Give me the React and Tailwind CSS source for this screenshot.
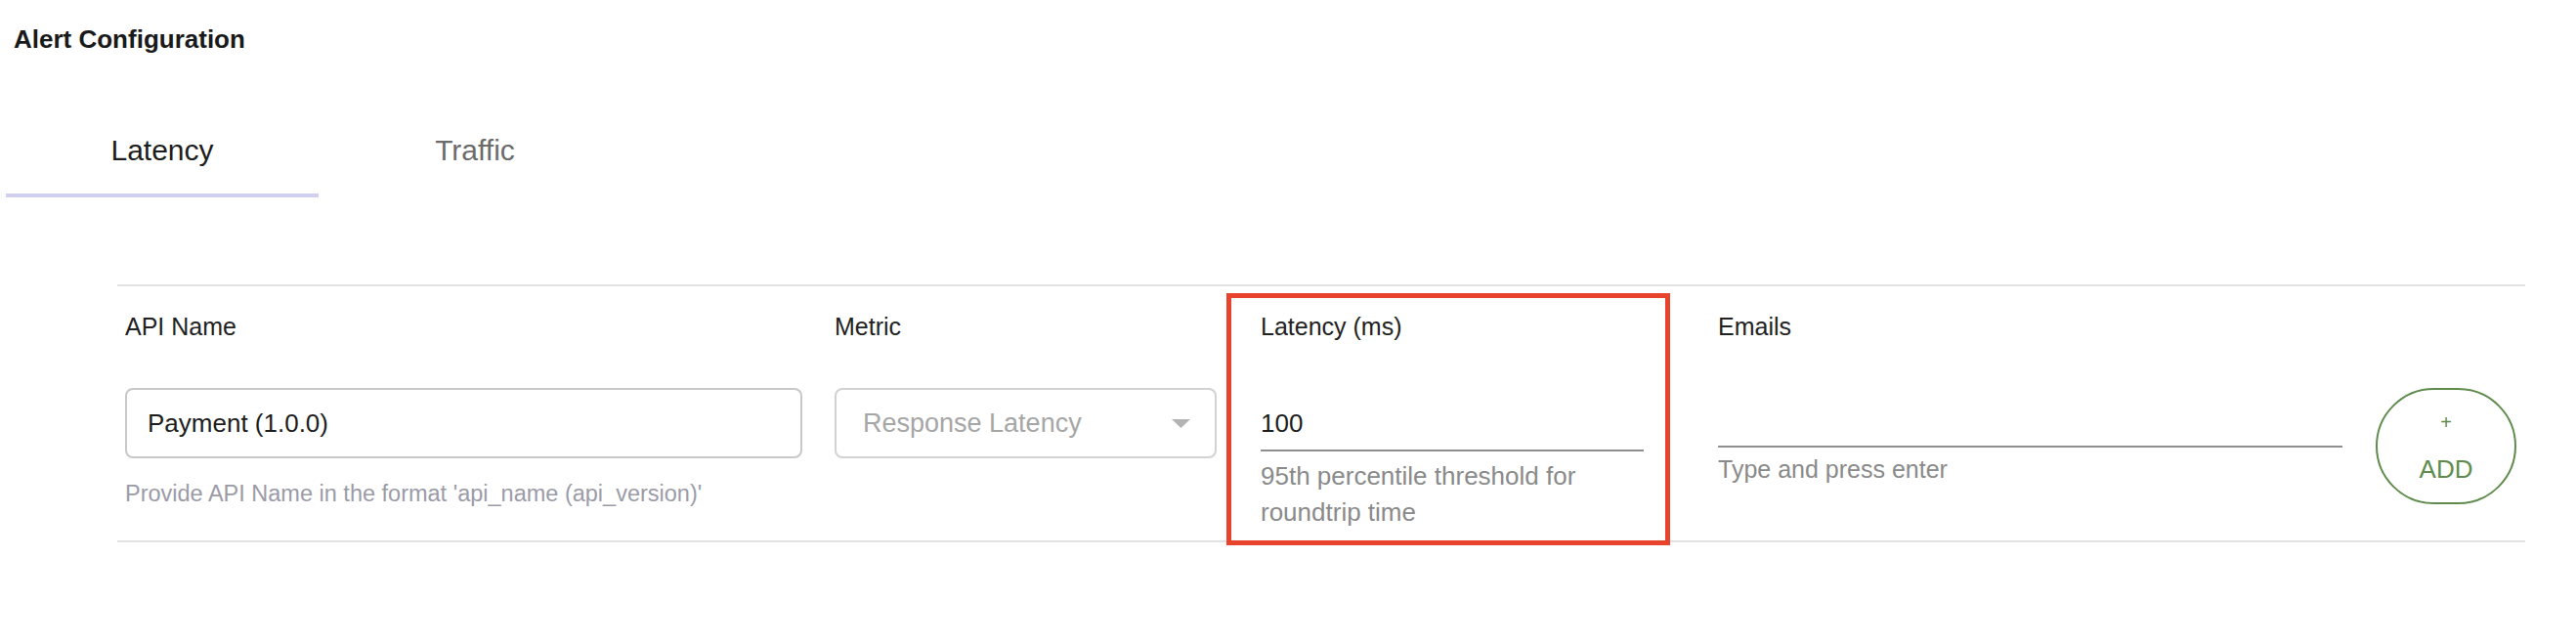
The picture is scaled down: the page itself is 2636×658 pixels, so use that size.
const tabs = [
  { label: "Latency", active: true },
  { label: "Traffic", active: false },
];

function Label({ children }) {
  return <div className="text-[25px] leading-[30px] text-[#222]">{children}</div>;
}

export default function App() {
  return (
    <div className="min-h-screen bg-white font-['Liberation_Sans',Arial,sans-serif] text-[#222]">
      {/* Header */}
      <div className="pt-[25px] pl-[14px]">
        <h1 className="text-[26px] leading-[30px] font-semibold text-[#1a1a1a]">Alert Configuration</h1>
      </div>

      {/* Tabs */}
      <div className="mt-[57px] ml-[6px] flex">
        {tabs.map((t) => (
          <div
            key={t.label}
            className={
              t.active
                ? "w-[320px] pt-[24px] pb-[26px] text-center text-[30px] leading-[36px] text-[#1d1d1d] border-b-4 border-[#d0d1f0]"
                : "w-[320px] pt-[24px] pb-[26px] text-center text-[30px] leading-[36px] text-[#6b6b6b] border-b-4 border-transparent"
            }
          >
            {t.label}
          </div>
        ))}
      </div>

      {/* Alert row */}
      <div className="relative mt-[89px] ml-[120px] w-[2464px] border-y-2 border-[#e2e2e2]">
        <div className="flex h-[260px] items-start">
          {/* API Name */}
          <div className="ml-[8px] w-[693px] pt-[26px]">
            <Label>API Name</Label>
            <div className="mt-[48px] flex h-[72px] items-center rounded-[8px] border-2 border-[#c8c8c8] px-[21px] text-[26px] text-[#1d1d1d]">
              Payment (1.0.0)
            </div>
            <div className="mt-[21px] text-[23.5px] leading-[30px] text-[#9b9ba8]">
              Provide API Name in the format 'api_name (api_version)'
            </div>
          </div>

          {/* Metric */}
          <div className="ml-[33px] w-[391px] pt-[26px]">
            <Label>Metric</Label>
            <div className="mt-[48px] flex h-[72px] items-center justify-between rounded-[8px] border-2 border-[#d2d2d2] pl-[27px] pr-[25px] text-[27px] text-[#a6a6a6]">
              <span>Response Latency</span>
              <svg width="19" height="9" viewBox="0 0 19 9">
                <polygon points="0,0 19,0 9.5,9" fill="#b3b3b3" />
              </svg>
            </div>
          </div>

          {/* Latency */}
          <div className="ml-[45px] w-[392px] pt-[26px]">
            <Label>Latency (ms)</Label>
            <div className="mt-[48px] flex h-[65px] items-end border-b-2 border-[#8f8f8f] pb-[12px] text-[26px] leading-[30px] text-[#1d1d1d]">
              100
            </div>
            <div className="mt-[7px] text-[26px] leading-[37px] text-[#8a8a8a]">
              95th percentile threshold for roundtrip time
            </div>
          </div>

          {/* Emails */}
          <div className="ml-[76px] w-[639px] pt-[26px]">
            <Label>Emails</Label>
            <div className="mt-[48px] h-[61px] border-b-2 border-[#8f8f8f]" />
            <div className="mt-[7px] text-[25px] leading-[30px] text-[#8a8a8a]">Type and press enter</div>
          </div>

          {/* Add */}
          <div className="ml-[34px] w-[144px] pt-[26px]">
            <div className="h-[30px]" />
            <button className="mt-[48px] flex h-[119px] w-[144px] flex-col items-center rounded-full border-2 border-[#5f8c4c] pt-[23px] text-[#5f8c4c]">
              <span className="text-[20px] leading-[20px]">+</span>
              <span className="mt-[23px] text-[26px] leading-[30px]">ADD</span>
            </button>
          </div>
        </div>

        {/* highlight annotation */}
        <div className="pointer-events-none absolute left-[1135px] top-[7px] h-[258px] w-[454px] border-[5px] border-[#e8432d]" />
      </div>
    </div>
  );
}
